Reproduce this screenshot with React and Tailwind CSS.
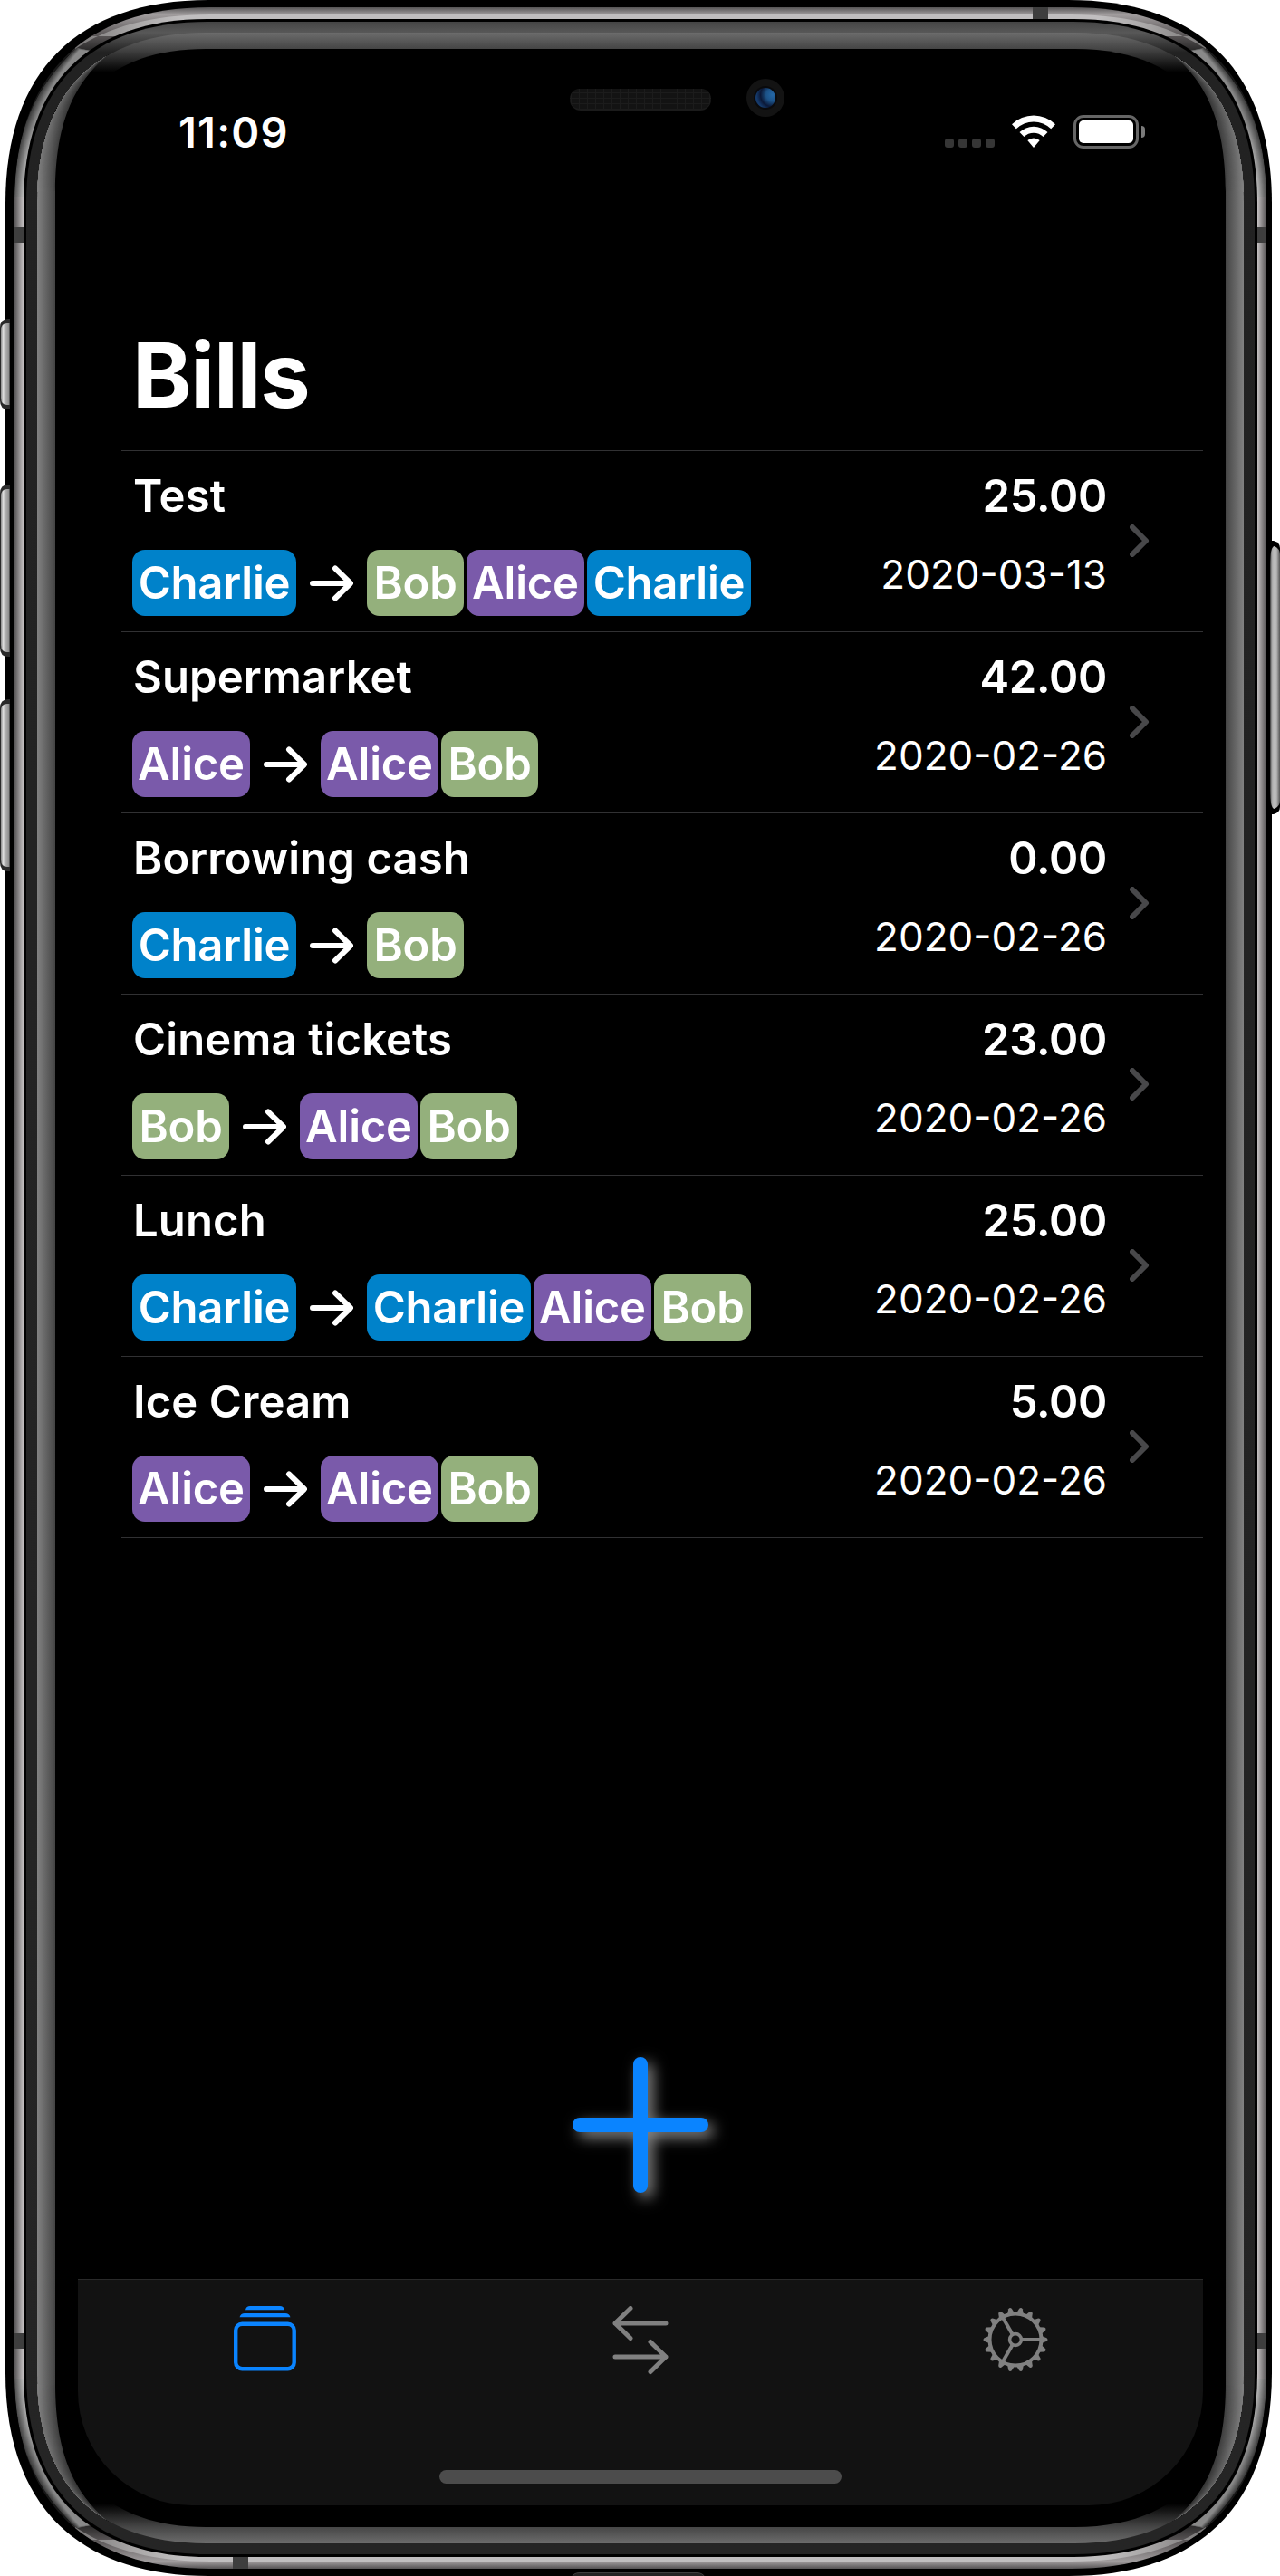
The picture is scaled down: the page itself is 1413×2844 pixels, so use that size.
import React from "react";

const BILLS = [
  { title: "Test", amount: "25.00", date: "2020-03-13", payer: "Charlie", people: ["Bob", "Alice", "Charlie"] },
  { title: "Supermarket", amount: "42.00", date: "2020-02-26", payer: "Alice", people: ["Alice", "Bob"] },
  { title: "Borrowing cash", amount: "0.00", date: "2020-02-26", payer: "Charlie", people: ["Bob"] },
  { title: "Cinema tickets", amount: "23.00", date: "2020-02-26", payer: "Bob", people: ["Alice", "Bob"] },
  { title: "Lunch", amount: "25.00", date: "2020-02-26", payer: "Charlie", people: ["Charlie", "Alice", "Bob"] },
  { title: "Ice Cream", amount: "5.00", date: "2020-02-26", payer: "Alice", people: ["Alice", "Bob"] },
];

const PERSON_STYLE = {
  Charlie: "w-[181px] bg-[#0082ca]",
  Alice: "w-[130px] bg-[#7a5aaa]",
  Bob: "w-[107px] bg-[#94b07c]",
};

// Rounded rectangle with continuous-curvature corners.
function squircle(x0, y0, x1, y1, r) {
  const e = r * 1.14;
  const h = e * (1 - 0.648);
  return `M${x0 + e} ${y0}H${x1 - e}C${x1 - h} ${y0} ${x1} ${y0 + h} ${x1} ${y0 + e}V${y1 - e}C${x1} ${y1 - h} ${x1 - h} ${y1} ${x1 - e} ${y1}H${x0 + e}C${x0 + h} ${y1} ${x0} ${y1 - h} ${x0} ${y1 - e}V${y0 + e}C${x0} ${y0 + h} ${x0 + h} ${y0} ${x0 + e} ${y0}Z`;
}

function Grad({ id, from, to, vertical, list }) {
  const len = to - from;
  const pos = vertical ? { x1: 0, x2: 0, y1: from, y2: to } : { y1: 0, y2: 0, x1: from, x2: to };
  return (
    <linearGradient id={id} gradientUnits="userSpaceOnUse" {...pos}>
      {list.map(([p, c, a = 1], i) => (
        <stop key={i} offset={(p - from) / len} stopColor={c} stopOpacity={a} />
      ))}
    </linearGradient>
  );
}

const mix = (a, b, t) => a + (b - a) * t;
const gray = (v) => `rgb(${Math.round(v)},${Math.round(v)},${Math.round(v)})`;
const STEPS = Array.from({ length: 20 }, (_, i) => i / 19);

// Corner placements: top-left, top-right, bottom-left, bottom-right.
const CORNERS = [
  "translate(0 0)",
  "translate(1414 0) scale(-1 1)",
  "translate(0 2844) scale(1 -1)",
  "translate(1414 2844) scale(-1 -1)",
];
const SIDES = [CORNERS[0], CORNERS[1]];

function MetalCorner() {
  return (
    <g>
      <path d="M83 54C120 30 165 16 235 16V40H83Z" fill="url(#strip)" />
      {STEPS.map((t) => (
        <path
          key={t}
          d={`M${mix(16, 26, t)} 218C${mix(17, 27, t)} 145 ${mix(38, 46, t)} ${mix(97, 102, t)} ${mix(85, 88, t)} ${mix(53, 55, t)}L120 60V218Z`}
          fill={gray(mix(84, 195, t))}
        />
      ))}
      <path d="M16 218C17 145 38 97 85 53L120 60V218Z" fill="url(#shade)" />
    </g>
  );
}

function RimCorner() {
  return (
    <g>
      {[...STEPS].reverse().map((t) => (
        <path
          key={t}
          d={`M${mix(42, 61, t)} 212C${mix(42, 61, t)} ${mix(136, 130, t)} ${mix(68, 85, t)} ${mix(95, 88, t)} 122 58H30V212Z`}
          fill={gray(mix(130, 68, t))}
        />
      ))}
      <path d="M61 212C61 130 85 88 122 58H30V212Z" fill="url(#rimShade)" />
    </g>
  );
}

function PhoneFrame() {
  return (
    <svg className="absolute inset-0" width="1413" height="2844" viewBox="0 0 1413 2844" fill="none" aria-hidden="true">
      <defs>
        <Grad id="btn" from={0} to={11} list={[[0, "#4a4a4a"], [1.5, "#9a9a9a"], [3.5, "#dcdcdc"], [5.5, "#b8b8b8"], [9.5, "#909090"], [11, "#3a3a3a"]]} />
        <Grad id="btnR" from={1402} to={1413} list={[[1402, "#333333"], [1404, "#a4a4a4"], [1406, "#bcbcbc"], [1409, "#b8b8b8"], [1413, "#555555"]]} />
        <Grad id="metal" vertical from={8} to={2836} list={[[8, "#555354"], [16, "#a19d9e"], [22, "#8f8b8c"], [38, "#5c5859"], [62, "#171717"], [2782, "#171717"], [2806, "#5c5859"], [2822, "#8f8b8c"], [2828, "#a19d9e"], [2836, "#555354"]]} />
        <Grad id="metalSide" from={16} to={26} list={[[16, "#555354"], [26, "#c6c2c3"]]} />
        <Grad id="strip" from={83} to={235} list={[[83, "#777575"], [150, "#aaa8a8"], [200, "#c0bebf"], [235, "#c0bebf"]]} />
        <Grad id="shade" vertical from={50} to={218} list={[[50, "#000000", 0.3], [130, "#000000", 0.3], [218, "#000000", 0]]} />
        <Grad id="rimShade" vertical from={55} to={212} list={[[55, "#000000", 0.4], [140, "#000000", 0.08], [212, "#000000", 0]]} />
        <Grad id="inner" vertical from={24} to={2820} list={[[24, "#444444"], [36, "#585858"], [58, "#222222"], [2820, "#252525"]]} />
        <Grad id="rim" vertical from={36} to={2808} list={[[36, "#6c6c6c"], [54, "#454545"], [80, "#000000"], [2764, "#000000"], [2790, "#464646"], [2808, "#6c6c6c"]]} />
        <Grad id="rimSide" from={41} to={61} list={[[41, "#828282"], [61, "#444444"]]} />
        <clipPath id="metalClip"><path d={squircle(16, 8, 1398, 2836, 189)} /></clipPath>
        <clipPath id="rimClip"><path d={squircle(41, 36, 1373, 2808, 164)} /></clipPath>
        <radialGradient id="lens" cx="0.85" cy="0.35" r="0.8">
          <stop offset="0" stopColor="#2467a6" />
          <stop offset="0.4" stopColor="#1c5287" />
          <stop offset="0.75" stopColor="#0b1837" />
          <stop offset="1" stopColor="#153a6b" />
        </radialGradient>
        <pattern id="mesh" width="9" height="6" patternUnits="userSpaceOnUse">
          <rect width="9" height="6" fill="#131313" />
          <path d="M0 .5H9M.5 0V6" stroke="#1c1c1c" />
        </pattern>
      </defs>

      <path d={squircle(6, 0, 1404, 2844, 197)} fill="#000000" />

      {[[352, 452], [535, 725], [772, 962]].map(([a, b]) => (
        <g key={a}>
          <path d={`M11 ${a}H9Q0 ${a} 0 ${a + 10}V${b - 10}Q0 ${b} 9 ${b}H11Z`} fill="#2a2a2a" />
          <path d={`M11 ${a + 5}H8Q1 ${a + 5} 1 ${a + 13}V${b - 13}Q1 ${b - 5} 8 ${b - 5}H11Z`} fill="url(#btn)" />
        </g>
      ))}
      <path d="M1402 597H1406Q1413 599 1413 605V891Q1413 897 1406 899H1402Z" fill="#000000" />
      <path d="M1402 625Q1402 603 1407 603Q1413 606 1413 612V884Q1413 890 1407 893Q1402 893 1402 871Z" fill="url(#btnR)" />

      <path d={squircle(16, 8, 1398, 2836, 189)} fill="url(#metal)" />
      <path d="M230 16H1184V21H230ZM230 2823H1184V2828H230Z" fill="#c0bebf" />
      <g clipPath="url(#metalClip)">
        {CORNERS.map((t) => (
          <g key={t} transform={t}><MetalCorner /></g>
        ))}
        {SIDES.map((t) => (
          <rect key={t} x="16" y="217" width="11" height="2410" fill="url(#metalSide)" transform={t} />
        ))}
      </g>
      <path d="M16 251h10v17h-10zM1388 251h10v17h-10zM16 2576h10v17h-10zM1388 2576h10v17h-10zM1140 8h17v13h-17zM257 2823h17v13h-17z" fill="#3e3e3e" />
      <path d={squircle(26, 21, 1388, 2823, 178)} fill="#000000" />
      <path d={squircle(29, 24, 1385, 2820, 176)} fill="url(#inner)" />
      <path d={squircle(41, 36, 1373, 2808, 164)} fill="url(#rim)" />
      <path d={squircle(61, 54, 1353, 2790, 146)} fill="#000000" />
      <g clipPath="url(#rimClip)">
        {CORNERS.map((t) => (
          <g key={t} transform={t}><RimCorner /></g>
        ))}
        {SIDES.map((t) => (
          <rect key={t} x="41" y="211" width="20" height="2422" fill="url(#rimSide)" transform={t} />
        ))}
      </g>

      <rect x="629" y="98" width="156" height="24" rx="12" fill="#1b1b1b" />
      <rect x="629" y="98" width="156" height="22" rx="11" fill="url(#mesh)" />
      <circle cx="845" cy="108" r="21" fill="#131313" />
      <circle cx="845" cy="108" r="13" fill="#0a0a0c" />
      <circle cx="845" cy="108" r="11" fill="url(#lens)" />
      <path d="M630.500 2846Q633 2840.500 640 2840.500H769Q776 2840.500 778.500 2846Z" fill="#222222" stroke="#3d3d3d" />
    </svg>
  );
}

function StatusBar() {
  return (
    <header className="flex h-[134px] items-center justify-between pl-[111px] pr-[64px]">
      <span className="mt-[2px] text-[47px] font-semibold leading-[60px] tracking-[1.2px]">11:09</span>
      <div className="flex items-center">
        <div className="mr-[19px] mt-[26px] flex gap-[5px]">
          {[0, 1, 2, 3].map((i) => (
            <span key={i} className="size-[10px] rounded-[3px] bg-[#363636]" />
          ))}
        </div>
        <svg className="mr-[20px]" width="48" height="37" viewBox="0 0 48 37" fill="#ffffff">
          <path d="M0 10.200A34.500 34.500 0 0 1 48 10.200L43.200 15.200A27.500 27.500 0 0 0 4.800 15.200Z" />
          <path d="M8.500 19A22.500 22.500 0 0 1 39.500 19L34.600 24A15.300 15.300 0 0 0 13.400 24Z" />
          <path d="M17.300 28.100A9.800 9.800 0 0 1 30.700 28.100L24 36Z" />
        </svg>
        <div className="flex items-center gap-[3px]">
          <div className="h-[37px] w-[72px] rounded-[11px] border-[3px] border-[#666666] p-[3px]">
            <div className="h-full w-full rounded-[5px] bg-white" />
          </div>
          <span className="h-[13px] w-[4px] rounded-r-full bg-[#7a7a7a]" />
        </div>
      </div>
    </header>
  );
}

function Person({ name }) {
  return (
    <span className={`h-[73px] rounded-[14px] text-center leading-[74px] ${PERSON_STYLE[name]}`}>{name}</span>
  );
}

function Arrow() {
  return (
    <svg className="mx-[15px]" width="48" height="40" viewBox="0 0 48 40" fill="none" stroke="#ffffff" strokeWidth="6" strokeLinecap="round" strokeLinejoin="round">
      <path d="M3 20H44.500M28 3.500L45 20L28 36.500" />
    </svg>
  );
}

function BillRow({ bill }) {
  return (
    <li className="flex h-[200px] border-b border-[#313133] pl-[12px] pr-[59px] pt-[19px] text-[49px] font-semibold leading-[60px]">
      <div className="flex flex-1 flex-col gap-[30px]">
        <h2 className="translate-y-[1px] pl-px tracking-[0.1px]">{bill.title}</h2>
        <div className="flex items-center tracking-[-0.2px]">
          <Person name={bill.payer} />
          <Arrow />
          <div className="flex gap-[3px]">
            {bill.people.map((p) => (
              <Person key={p} name={p} />
            ))}
          </div>
        </div>
      </div>
      <div className="flex flex-col items-end gap-[27px]">
        <span className="translate-y-[1px] tracking-[-0.3px]">{bill.amount}</span>
        <span className="text-[44px] font-[390]">{bill.date}</span>
      </div>
      <svg className="ml-[25px] mt-[62px]" width="22" height="36" viewBox="0 0 22 36" fill="none" stroke="#48484a" strokeWidth="6" strokeLinecap="round" strokeLinejoin="round">
        <path d="M3 3L18 18L3 33" />
      </svg>
    </li>
  );
}

function AddButton() {
  return (
    <button className="drop-shadow-[6px_6px_8px_rgba(160,160,160,0.85)]">
      <svg width="150" height="150" viewBox="0 0 150 150" stroke="#0a84ff" strokeWidth="16" strokeLinecap="round">
        <path d="M75 8V142M8 75H142" />
      </svg>
    </button>
  );
}

function StackIcon() {
  return (
    <svg width="69" height="72" viewBox="0 0 69 72" fill="#0a84ff">
      <path d="M13 4.200Q14 0 18 0H51Q55 0 56 4.200ZM6.500 12.200Q8 8 12 8H57Q61 8 62.500 12.200Z" />
      <rect x="2.200" y="19.700" width="64.500" height="49.500" rx="7" fill="none" stroke="#0a84ff" strokeWidth="4.400" />
    </svg>
  );
}

function TransferIcon() {
  return (
    <svg width="62" height="76" viewBox="0 0 62 76" fill="none" stroke="#808080" strokeWidth="5" strokeLinecap="round" strokeLinejoin="round">
      <path d="M59 19H3M20 2.500L3 19L20 35.500M3 56H59M42 39.500L59 56L42 72.500" />
    </svg>
  );
}

function GearIcon() {
  const teeth = Array.from({ length: 18 }, (_, i) => i * 20);
  return (
    <svg className="mt-px" width="72" height="72" viewBox="-36 -36 72 72" fill="none" stroke="#808080" strokeWidth="4">
      <circle r="28.500" />
      <circle r="6.400" strokeWidth="3.600" />
      {[0, 120, 240].map((a) => (
        <path key={a} d="M7 0H28" transform={`rotate(${a})`} />
      ))}
      {teeth.map((a) => (
        <path key={a} d="M29 -4L34.500 -1.800Q36.500 0 34.500 1.800L29 4Z" fill="#808080" stroke="none" transform={`rotate(${a})`} />
      ))}
    </svg>
  );
}

function TabBar() {
  return (
    <nav className="flex h-[250px] flex-col items-center justify-between rounded-b-[126px] border-t border-[#2a2a2a] bg-[#121212] pb-[24px] pt-[29px]">
      <div className="grid w-full grid-cols-3 items-start justify-items-center">
        <button className="-translate-x-px"><StackIcon /></button>
        <button><TransferIcon /></button>
        <button><GearIcon /></button>
      </div>
      <div className="h-[15px] w-[444px] rounded-full bg-[#4c4c4c]" />
    </nav>
  );
}

export default function App() {
  return (
    <div className="relative h-[2844px] w-[1413px] overflow-hidden bg-white pl-[86px] pt-[78px] font-['Inter',sans-serif] text-white">
      <PhoneFrame />
      <main className="relative flex h-[2688px] w-[1242px] flex-col">
        <StatusBar />
        <h1 className="mt-[142px] h-[143px] pl-[60px] text-[99px] font-bold leading-[120px] tracking-[-1.2px]">Bills</h1>
        <ul className="ml-[48px] border-t border-[#313133]">
          {BILLS.map((b) => (
            <BillRow key={b.title} bill={b} />
          ))}
        </ul>
        <div className="mt-auto flex justify-center pb-[95px]">
          <AddButton />
        </div>
        <TabBar />
      </main>
    </div>
  );
}
